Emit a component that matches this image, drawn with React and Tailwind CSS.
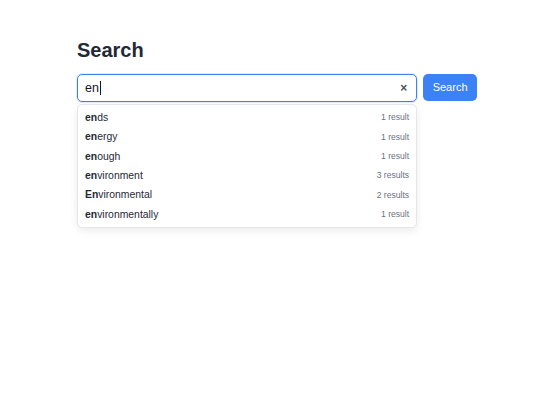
const suggestions = [
  { word: "ends", count: 1 },
  { word: "energy", count: 1 },
  { word: "enough", count: 1 },
  { word: "environment", count: 3 },
  { word: "Environmental", count: 2 },
  { word: "environmentally", count: 1 },
];

export default function App() {
  const query = "en";

  return (
    <div className="min-h-screen bg-white pt-[39px] pl-[77px] font-['Liberation_Sans',Arial,sans-serif] text-[#1f2937]">
      <div className="w-[400px]">
        <h1 className="text-[20px] font-bold leading-[22px] text-[#1f2937]">Search</h1>

        <div className="mt-[13px] flex gap-[6px]">
          <div className="relative w-[341px]">
            <div className="flex h-[28px] items-center rounded-[5px] border-[1.5px] border-[#3b82f6] bg-white pl-[7px] pr-[9px] shadow-[0_0_0_1px_rgba(59,130,246,0.15)]">
              <div className="flex flex-1 items-center text-[12.5px] text-[#111827]">
                {query}
                <span className="ml-[1px] inline-block h-[14px] w-[1px] bg-[#111827]" />
              </div>
              <span className="text-[12px] font-bold leading-none text-[#4b5563]">×</span>
            </div>

            <ul className="absolute left-0 right-0 top-[30px] rounded-[5px] border border-[#e5e7eb] bg-white py-[3px] shadow-[0_3px_8px_rgba(0,0,0,0.08)]">
              {suggestions.map((s) => (
                <li
                  key={s.word}
                  className="flex h-[19.4px] items-center justify-between pl-[7px] pr-[7px]"
                >
                  <span className="text-[10.4px] text-[#1f2937]">
                    <b className="font-bold">{s.word.slice(0, 2)}</b>
                    {s.word.slice(2)}
                  </span>
                  <span className="text-[8.6px] text-[#6b7280]">
                    {s.count} {s.count === 1 ? "result" : "results"}
                  </span>
                </li>
              ))}
            </ul>
          </div>

          <button className="h-[27px] w-[54px] rounded-[5px] bg-[#3b82f6] text-[11px] text-white">
            Search
          </button>
        </div>
      </div>
    </div>
  );
}
